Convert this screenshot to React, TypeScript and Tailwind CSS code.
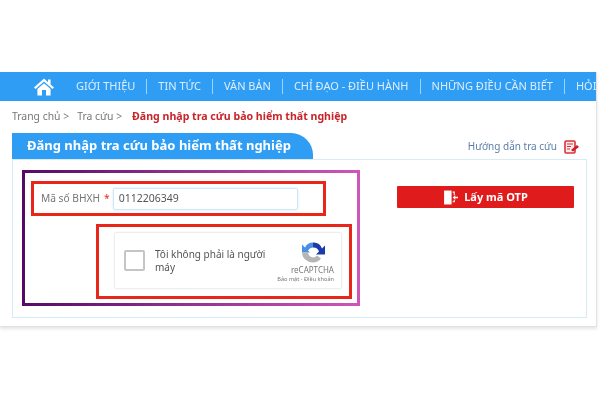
import React from "react";

function Sep() {
  return <span className="block w-px h-[15px] bg-[#9fd3fb] shrink-0" />;
}

const items = ["GIỚI THIỆU", "TIN TỨC", "VĂN BẢN", "CHỈ ĐẠO - ĐIỀU HÀNH", "NHỮNG ĐIỀU CẦN BIẾT", "HỎI"];

export default function App() {
  return (
    <div className="w-[600px] h-[400px] bg-white overflow-hidden font-['Noto_Sans','Liberation_Sans',sans-serif] pt-[72px] blur-[0.6px]">
      <div className="w-[597px] h-[255px] border-r border-b border-[#e2e2e2] shadow-[0_2px_3px_#e5e5e5]">
        {/* nav */}
        <nav className="h-[29px] bg-[#2f9df4] flex items-center pl-[34px] text-[#dceefd] text-[11px] overflow-hidden whitespace-nowrap">
          <svg width="20" height="18" viewBox="0 0 20 18" className="shrink-0 mr-[22px]">
            <path d="M10 0.5 L0 9.5 L1.6 11 L10 3.6 L18.4 11 L20 9.5 L16.6 6.5 V1.5 H14 V4.2 Z" fill="#fff" />
            <path d="M3.4 11 L10 5.2 L16.6 11 V17.5 H12 V12 H8 V17.5 H3.4 Z" fill="#fff" />
          </svg>
          {items.map((t, i) => (
            <React.Fragment key={t}>
              {i > 0 && <span className="mx-[11px]"><Sep /></span>}
              <span>{t}</span>
            </React.Fragment>
          ))}
        </nav>

        {/* breadcrumb */}
        <div className="h-[32px] pl-[12px] flex items-center text-[10.4px] text-[#777] whitespace-nowrap">
          <span>Trang chủ &gt;</span>
          <span className="ml-[8px]">Tra cứu &gt;</span>
          <span className="ml-[10px] text-[#c8252b] font-bold text-[10.6px]">Đăng nhập tra cứu bảo hiểm thất nghiệp</span>
        </div>

        {/* section */}
        <div className="ml-[12px] w-[575px]">
          <div className="flex items-end justify-between h-[26px]">
            <div className="w-[301px] h-[26px] bg-[#2f9df4] rounded-tr-[22px] pl-[15px] flex items-center text-white font-bold text-[13px] whitespace-nowrap">
              Đăng nhập tra cứu bảo hiểm thất nghiệp
            </div>
            <div className="flex items-center gap-[7px] pr-[8px] pb-[5px] text-[10px] text-[#5c7ea8] whitespace-nowrap">
              <span>Hướng dẫn tra cứu</span>
              <svg width="15" height="14" viewBox="0 0 15 14" fill="none">
                <rect x="1" y="1" width="10" height="12" rx="1" stroke="#d9343a" strokeWidth="1.6" fill="#fdeaea" />
                <path d="M3 4h6M3 6.5h4M3 9h3" stroke="#d9343a" strokeWidth="1.2" />
                <path d="M7 10 L13 5 L15 7 L9 11.5 Z" fill="#c8202a" />
              </svg>
            </div>
          </div>

          <div className="h-[159px] border border-[#d5ecf5] flex items-start pt-[10px] pl-[9px]">
            {/* purple annotation */}
            <div className="w-[338px] h-[136px] border-[3px] [border-image:linear-gradient(90deg,#560a66,#8e2f8e_45%,#cf55b8)_1] pt-[8px] pl-[6px] shrink-0">
              <div className="w-[295px] h-[35px] border-[3px] border-[#e8261a] flex items-center pl-[7px] text-[10.2px]">
                <span className="text-[#777]">Mã số BHXH</span>
                <span className="text-[#e8261a] ml-[4px]">*</span>
                <div className="ml-[3px] w-[185px] h-[22px] border border-[#cfe6f7] rounded-[2px] shadow-[0_0_3px_#d5eafa] pl-[5px] flex items-center text-[#555] text-[10.5px]">
                  0112206349
                </div>
              </div>
              <div className="mt-[8px] ml-[65px] w-[256px] h-[75px] border-[3px] border-[#e8261a] pt-[5px] pl-[15px]">
                <div className="w-[228px] h-[57px] border border-[#eeeeee] rounded-[2px] flex items-center pl-[9px] shadow-[0_0_2px_#eee]">
                  <div className="w-[21px] h-[21px] border-2 border-[#c5c5c5] rounded-[2px] bg-white shrink-0" />
                  <div className="ml-[10px] w-[114px] text-[10px] leading-[13px] text-[#555] shrink-0">
                    Tôi không phải là người máy
                  </div>
                  <div className="flex flex-col items-end ml-[5px] w-[60px] shrink-0">
                    <svg width="26" height="25" viewBox="0 0 26 24" fill="none" className="mr-[8px]">
                      <path d="M13 3 A9 9 0 0 1 22 9 L25 6 V15 H16 L19 12 A6 6 0 0 0 13 8 Z" fill="#1c3aa9" />
                      <path d="M13 3 A9 9 0 0 0 5 8 L2 5 V13 H10 L8 11 A6 6 0 0 1 13 8 Z" fill="#4a90e2" />
                      <path d="M2 13 A11 10 0 0 0 13 23 A10 10 0 0 0 21 19 L17 16 A5 5 0 0 1 13 18 A6 6 0 0 1 8 13 Z" fill="#b5b5b5" />
                    </svg>
                    <span className="text-[8px] leading-[9px] mt-[1px] text-[#777]">reCAPTCHA</span>
                    <span className="text-[5.6px] leading-[7px] mt-[2px] text-[#777] whitespace-nowrap">Bảo mật - Điều khoản</span>
                  </div>
                </div>
              </div>
            </div>

            {/* OTP */}
            <div className="ml-[37px] mt-[16px] w-[177px] h-[22px] bg-[#e01b1b] rounded-[1px] flex items-center justify-center gap-[6px] text-white font-bold text-[11px]">
              <svg width="15" height="15" viewBox="0 0 14 14">
                <path d="M1 0.5 H8 V13.5 H1 Z" fill="#fff" />
                <path d="M9 1.5 H11 V5 H10 V2.5 H9 Z M9 11.5 H11 V9 H10 V10.5 H9 Z" fill="#fff" />
                <path d="M9 7 L11.5 5 V6.2 H14 V7.8 H11.5 V9 Z" fill="#fff" />
              </svg>
              <span>Lấy mã OTP</span>
            </div>
          </div>
        </div>
      </div>
    </div>
  );
}
